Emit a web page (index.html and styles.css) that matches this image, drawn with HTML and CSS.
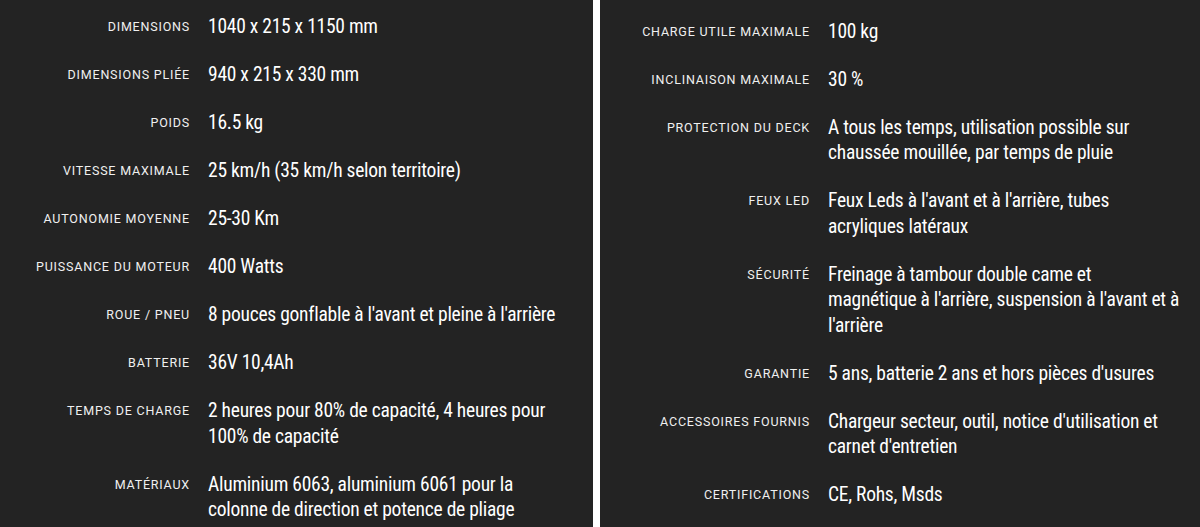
FILE: index.html
```html
<!DOCTYPE html>
<html>
<head>
  <title>Caractéristiques</title>
  <link rel="stylesheet" href="styles.css">
</head>
<body>
  <div class="sheet">
    <div class="panel panel-left">
      <div class="row"><span class="label">Dimensions</span><span class="value">1040 x 215 x 1150 mm</span></div>
      <div class="row"><span class="label">Dimensions pliée</span><span class="value">940 x 215 x 330 mm</span></div>
      <div class="row"><span class="label">Poids</span><span class="value">16.5 kg</span></div>
      <div class="row"><span class="label">Vitesse maximale</span><span class="value">25 km/h (35 km/h selon territoire)</span></div>
      <div class="row"><span class="label">Autonomie moyenne</span><span class="value">25-30 Km</span></div>
      <div class="row"><span class="label">Puissance du moteur</span><span class="value">400 Watts</span></div>
      <div class="row"><span class="label">Roue / Pneu</span><span class="value">8 pouces gonflable à l'avant et pleine à l'arrière</span></div>
      <div class="row"><span class="label">Batterie</span><span class="value">36V 10,4Ah</span></div>
      <div class="row"><span class="label">Temps de charge</span><span class="value">2 heures pour 80% de capacité, 4 heures pour<br>100% de capacité</span></div>
      <div class="row"><span class="label">Matériaux</span><span class="value">Aluminium 6063, aluminium 6061 pour la<br>colonne de direction et potence de pliage</span></div>
    </div>
    <div class="panel panel-right">
      <div class="row"><span class="label">Charge utile maximale</span><span class="value">100 kg</span></div>
      <div class="row"><span class="label">Inclinaison maximale</span><span class="value">30 %</span></div>
      <div class="row"><span class="label">Protection du deck</span><span class="value">A tous les temps, utilisation possible sur<br>chaussée mouillée, par temps de pluie</span></div>
      <div class="row"><span class="label">Feux LED</span><span class="value">Feux Leds à l'avant et à l'arrière, tubes<br>acryliques latéraux</span></div>
      <div class="row"><span class="label">Sécurité</span><span class="value">Freinage à tambour double came et<br>magnétique à l'arrière, suspension à l'avant et à<br>l'arrière</span></div>
      <div class="row"><span class="label">Garantie</span><span class="value">5 ans, batterie 2 ans et hors pièces d'usures</span></div>
      <div class="row"><span class="label">Accessoires fournis</span><span class="value">Chargeur secteur, outil, notice d'utilisation et<br>carnet d'entretien</span></div>
      <div class="row"><span class="label">Certifications</span><span class="value">CE, Rohs, Msds</span></div>
    </div>
  </div>
</body>
</html>
```
FILE: styles.css
```css
body {
  margin: 0;
  padding: 0;
  background-color: #fff;
  height: 527px;
  overflow: hidden;
}

.sheet {
  display: flex;
  gap: 7px;
  height: 527px;
}

.panel {
  background-color: #232323;
  color: #fff;
  box-sizing: border-box;
}

.panel-left {
  width: 593px;
  padding: 3px 0 0 19px;
}

.panel-right {
  flex: 1;
  padding: 7.5px 0 0 39px;
}

.row {
  display: grid;
  grid-template-columns: 170px 372px;
  column-gap: 19px;
  padding: 11.25px 0;
}

.label {
  font-family: Roboto, "Liberation Sans", sans-serif;
  font-size: 12.5px;
  line-height: 25.5px;
  letter-spacing: 0.8px;
  text-transform: uppercase;
  text-align: right;
  color: #f0f0f0;
  margin-right: -1px;
}

.value {
  font-family: "Roboto Condensed", Roboto, sans-serif;
  font-size: 19.5px;
  line-height: 25.5px;
  letter-spacing: -0.25px;
  white-space: nowrap;
  color: #fff;
}
```
